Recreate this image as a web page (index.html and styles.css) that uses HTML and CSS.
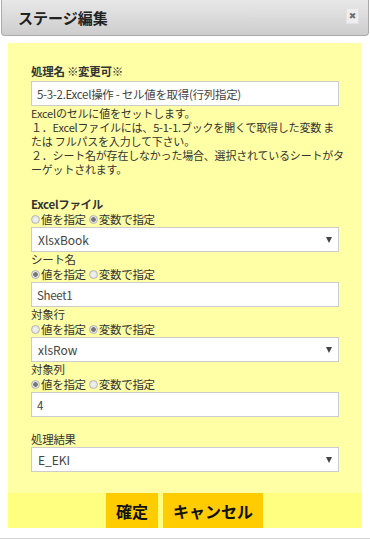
FILE: index.html
```html
<!DOCTYPE html>
<html lang="ja">
<head>
    <meta charset="UTF-8">
    <meta name="viewport" content="width=device-width, initial-scale=1.0">
    <title>ステージ編集</title>
    <link rel="stylesheet" href="styles.css">
</head>
<body>
    <div class="dialog">
        <div class="titlebar">
            <span class="title">ステージ編集</span>
            <span class="close">&#10006;</span>
        </div>
        <div class="panel">
            <div class="form">
                <div class="label bold">処理名 ※変更可※</div>
                <input class="field" type="text" value="5-3-2.Excel操作 - セル値を取得(行列指定)">
                <p class="desc">Excelのセルに値をセットします。<br>１．Excelファイルには、5-1-1.ブックを開くで取得した変数 ま<br>たは フルパスを入力して下さい。<br>２．シート名が存在しなかった場合、選択されているシートがタ<br>ーゲットされます。</p>

                <div class="group">
                    <div class="label bold">Excelファイル</div>
                    <div class="radios">
                        <label><input type="radio" name="r1">値を指定</label>
                        <label><input type="radio" name="r1" checked>変数で指定</label>
                    </div>
                    <div class="select">XlsxBook</div>
                </div>
                <div class="group">
                    <div class="label">シート名</div>
                    <div class="radios">
                        <label><input type="radio" name="r2" checked>値を指定</label>
                        <label><input type="radio" name="r2">変数で指定</label>
                    </div>
                    <input class="field" type="text" value="Sheet1">
                </div>
                <div class="group">
                    <div class="label">対象行</div>
                    <div class="radios">
                        <label><input type="radio" name="r3">値を指定</label>
                        <label><input type="radio" name="r3" checked>変数で指定</label>
                    </div>
                    <div class="select">xlsRow</div>
                </div>
                <div class="group">
                    <div class="label">対象列</div>
                    <div class="radios">
                        <label><input type="radio" name="r4" checked>値を指定</label>
                        <label><input type="radio" name="r4">変数で指定</label>
                    </div>
                    <input class="field" type="text" value="4">
                </div>

                <div class="group result">
                    <div class="label">処理結果</div>
                    <div class="select">E_EKI</div>
                </div>
            </div>
            <div class="footer">
                <button class="btn">確定</button>
                <button class="btn">キャンセル</button>
            </div>
        </div>
        <div class="bottomline"></div>
    </div>
</body>
</html>
```

FILE: styles.css
```css
body{
    margin: 0;
    background-color: #fff;
    font-family: "Noto Sans CJK JP", "Liberation Sans", sans-serif;
    color: #333;
}
/*barra del titulo*/
.titlebar{
    margin: 0 1px;
    height: 35px;
    border: 1px solid #aaa;
    border-top: none;
    border-radius: 0 0 4px 4px;
    background: linear-gradient(#e8e8e8, #cdcdcd);
    display: flex;
    align-items: center;
    justify-content: space-between;
    padding: 0 9px 0 16px;
}
.title{
    font-size: 15px;
    font-weight: bold;
    color: #222;
    line-height: 18px;
}
.close{
    width: 11px;
    height: 14px;
    margin-top: -3px;
    background: #eeeeee;
    border: 1px solid #e2e2e2;
    color: #6f6f6f;
    font-size: 9px;
    font-weight: bold;
    line-height: 14px;
    text-align: center;
    font-family: "DejaVu Sans", sans-serif;
}
/*cuadro amarillo*/
.panel{
    margin: 7px 9px 0 8px;
    width: 353px;
    background-color: #ffffa5;
}
.form{
    padding: 21px 22px 21px 23px;
}
.label{
    font-size: 11.5px;
    letter-spacing: -0.3px;
    line-height: 15px;
    height: 15px;
    color: #333;
}
.bold{
    font-weight: bold;
}
.field{
    display: block;
    box-sizing: border-box;
    width: 100%;
    height: 25px;
    margin: 2px 0 0 0;
    padding: 0 5px;
    border: 1px solid #ccc;
    background: #fff;
    font-family: "Noto Sans CJK JP", "Liberation Sans", sans-serif;
    font-size: 11.5px;
    letter-spacing: -0.3px;
    color: #444;
    outline: none;
}
.desc{
    margin: 0;
    font-size: 11px;
    line-height: 14px;
    letter-spacing: -0.2px;
    white-space: nowrap;
    color: #333;
}
.group{
    height: 55px;
}
.desc + .group{
    margin-top: 21px;
}
.group .field{
    margin-top: 0;
}
.radios{
    display: flex;
    gap: 3px;
    height: 15px;
    font-size: 11.5px;
    letter-spacing: -0.3px;
    line-height: 15px;
}
.radios label{
    display: flex;
    align-items: center;
}
.radios input{
    appearance: none;
    -webkit-appearance: none;
    width: 9px;
    height: 9px;
    margin: 0 1px 0 0;
    border: 1px solid #b5b5b5;
    border-radius: 50%;
    background: radial-gradient(#f4f4f4, #dcdcdc);
}
.radios input:checked{
    background: radial-gradient(circle, #777 0, #777 2px, #e6e6e6 2.6px, #dcdcdc 100%);
}
.select{
    box-sizing: border-box;
    height: 25px;
    border: 1px solid #ccc;
    background: #fff;
    padding: 0 6px;
    font-size: 12px;
    line-height: 23px;
    color: #444;
    position: relative;
}
.select::after{
    content: "";
    position: absolute;
    right: 6px;
    top: 9px;
    border-left: 3px solid transparent;
    border-right: 3px solid transparent;
    border-top: 6px solid #444;
}
.result{
    margin-top: 15px;
    height: auto;
}
/*botones de abajo*/
.footer{
    background-color: #ffff80;
    height: 35px;
    display: flex;
    justify-content: center;
    gap: 5px;
}
.btn{
    height: 35px;
    padding: 0 10px;
    border: none;
    background-color: #ffcc00;
    font-family: "Noto Sans CJK JP", sans-serif;
    font-size: 16px;
    font-weight: bold;
    color: #111;
}
.bottomline{
    margin-top: 10px;
    height: 1px;
    background: #d4d4d4;
}
```
